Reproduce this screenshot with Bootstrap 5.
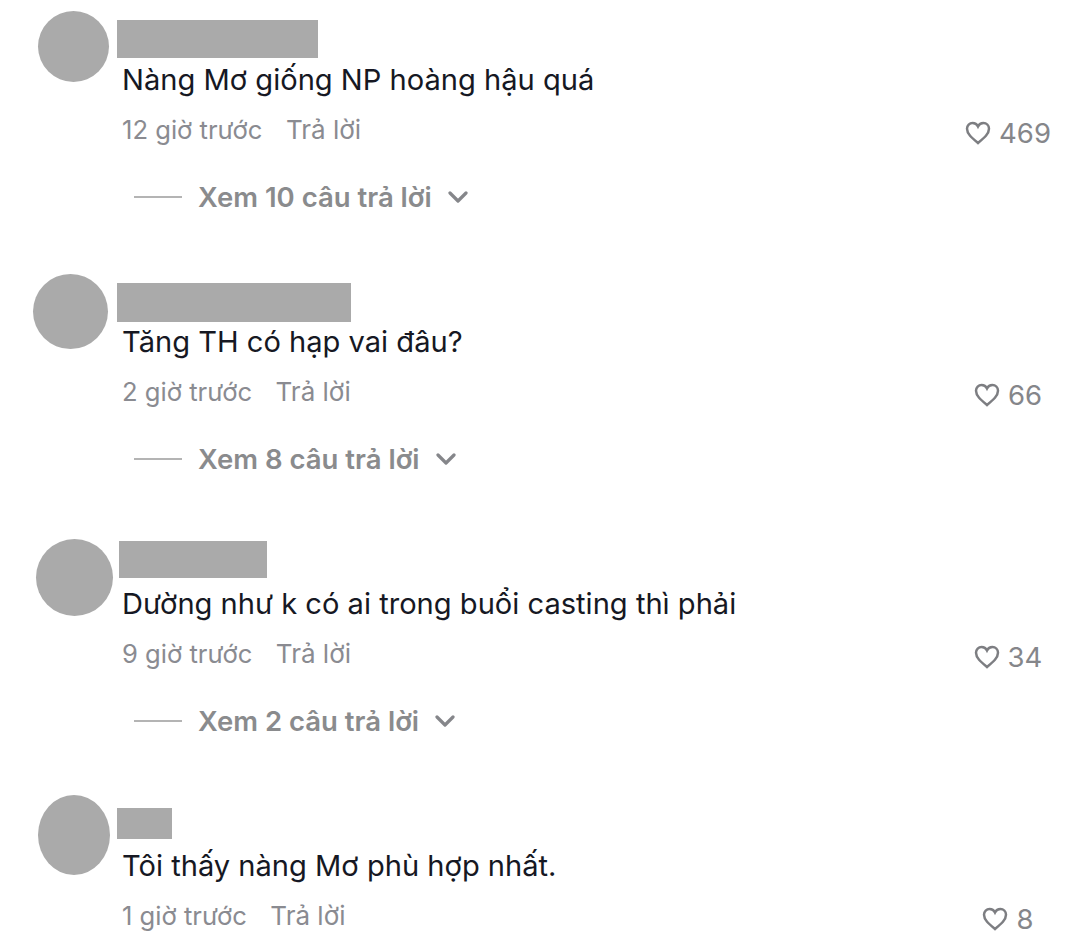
<!DOCTYPE html>
<html lang="vi"><head><meta charset="utf-8">
<link href="https://cdn.jsdelivr.net/npm/bootstrap@5.3.0/dist/css/bootstrap.min.css" rel="stylesheet">
<script src="https://cdn.jsdelivr.net/npm/bootstrap@5.3.0/dist/js/bootstrap.bundle.min.js"></script>
<style>
html,body{background:#fff;overflow:hidden;}
body{font-family:"Inter","Noto Sans",sans-serif;width:1078px;height:950px;}
.cmt{height:262px;}
.cmt:last-child{height:164px;}
.avcol{width:117px;flex:none;}
.ava{border-radius:50%;background:#aaa;}
.a1{width:71px;height:71px;margin:11px 0 0 38px;}
.a2{width:75px;height:75px;margin:12px 0 0 33px;}
.a3{width:77px;height:77px;margin:15px 0 0 36px;}
.a4{width:72px;height:80px;margin:9px 0 0 38px;}
.nmwrap{height:62px;}
.nm{background:#aaa;}
.n1{width:201px;height:38px;margin-top:20px;}
.n2{width:234px;height:39px;margin-top:21px;}
.n3{width:148px;height:37px;margin:17px 0 0 2px;}
.n4{width:55px;height:31px;margin-top:22px;}
.ctext{margin-left:5px;height:52px;font-size:29.1px;color:#161823;line-height:36px;white-space:nowrap;}
.meta{margin-left:5px;font-size:25.6px;color:#8a8b91;line-height:32px;white-space:nowrap;gap:23.5px;}
.reply{font-size:26px;}
.likes{width:140px;flex:none;font-size:27.5px;color:#85868a;line-height:32px;gap:8px;margin-top:3px;}
.more{margin:32px 0 0 17px;font-size:27.5px;font-weight:600;color:#8a8b8d;line-height:32px;gap:16px;white-space:nowrap;}
.rule{width:48px;height:2px;background:#b4b4b4;}
</style></head><body>

<div class="cmt d-flex">
  <div class="avcol"><div class="ava a1"></div></div>
  <div class="flex-grow-1">
    <div class="nmwrap d-flex align-items-start"><div class="nm n1"></div></div>
    <div class="ctext">Nàng Mơ giống NP hoàng hậu quá</div>
    <div class="d-flex justify-content-between">
      <div class="meta d-flex"><span>12 giờ trước</span><span class="reply">Trả lời</span></div>
      <div class="likes d-flex align-items-center justify-content-center">
        <svg width="26" height="26" viewBox="0 0 26 26" fill="none" stroke="#7d7e82" stroke-width="2.5"><path d="M13 23 C7 18 2 14 2 8.8 C2 5.4 4.6 3 7.6 3 C10 3 12 4.4 13 6.4 C14 4.4 16 3 18.4 3 C21.4 3 24 5.4 24 8.8 C24 14 19 18 13 23Z"/></svg><span>469</span>
      </div>
    </div>
    <div class="more d-flex align-items-center"><div class="rule"></div><div>Xem 10 câu trả lời</div><svg width="20" height="14" viewBox="0 0 20 14" fill="none" stroke="#85868a" stroke-width="3.2" stroke-linecap="round" stroke-linejoin="round"><path d="M2 3 L10 11 L18 3"/></svg></div>
  </div>
</div>

<div class="cmt d-flex">
  <div class="avcol"><div class="ava a2"></div></div>
  <div class="flex-grow-1">
    <div class="nmwrap d-flex align-items-start"><div class="nm n2"></div></div>
    <div class="ctext">Tăng TH có hạp vai đâu?</div>
    <div class="d-flex justify-content-between">
      <div class="meta d-flex"><span>2 giờ trước</span><span class="reply">Trả lời</span></div>
      <div class="likes d-flex align-items-center justify-content-center">
        <svg width="26" height="26" viewBox="0 0 26 26" fill="none" stroke="#7d7e82" stroke-width="2.5"><path d="M13 23 C7 18 2 14 2 8.8 C2 5.4 4.6 3 7.6 3 C10 3 12 4.4 13 6.4 C14 4.4 16 3 18.4 3 C21.4 3 24 5.4 24 8.8 C24 14 19 18 13 23Z"/></svg><span>66</span>
      </div>
    </div>
    <div class="more d-flex align-items-center"><div class="rule"></div><div>Xem 8 câu trả lời</div><svg width="20" height="14" viewBox="0 0 20 14" fill="none" stroke="#85868a" stroke-width="3.2" stroke-linecap="round" stroke-linejoin="round"><path d="M2 3 L10 11 L18 3"/></svg></div>
  </div>
</div>

<div class="cmt d-flex">
  <div class="avcol"><div class="ava a3"></div></div>
  <div class="flex-grow-1">
    <div class="nmwrap d-flex align-items-start"><div class="nm n3"></div></div>
    <div class="ctext">Dường như k có ai trong buổi casting thì phải</div>
    <div class="d-flex justify-content-between">
      <div class="meta d-flex"><span>9 giờ trước</span><span class="reply">Trả lời</span></div>
      <div class="likes d-flex align-items-center justify-content-center">
        <svg width="26" height="26" viewBox="0 0 26 26" fill="none" stroke="#7d7e82" stroke-width="2.5"><path d="M13 23 C7 18 2 14 2 8.8 C2 5.4 4.6 3 7.6 3 C10 3 12 4.4 13 6.4 C14 4.4 16 3 18.4 3 C21.4 3 24 5.4 24 8.8 C24 14 19 18 13 23Z"/></svg><span>34</span>
      </div>
    </div>
    <div class="more d-flex align-items-center"><div class="rule"></div><div>Xem 2 câu trả lời</div><svg width="20" height="14" viewBox="0 0 20 14" fill="none" stroke="#85868a" stroke-width="3.2" stroke-linecap="round" stroke-linejoin="round"><path d="M2 3 L10 11 L18 3"/></svg></div>
  </div>
</div>

<div class="cmt d-flex">
  <div class="avcol"><div class="ava a4"></div></div>
  <div class="flex-grow-1">
    <div class="nmwrap d-flex align-items-start"><div class="nm n4"></div></div>
    <div class="ctext">Tôi thấy nàng Mơ phù hợp nhất.</div>
    <div class="d-flex justify-content-between">
      <div class="meta d-flex"><span>1 giờ trước</span><span class="reply">Trả lời</span></div>
      <div class="likes d-flex align-items-center justify-content-center">
        <svg width="26" height="26" viewBox="0 0 26 26" fill="none" stroke="#7d7e82" stroke-width="2.5"><path d="M13 23 C7 18 2 14 2 8.8 C2 5.4 4.6 3 7.6 3 C10 3 12 4.4 13 6.4 C14 4.4 16 3 18.4 3 C21.4 3 24 5.4 24 8.8 C24 14 19 18 13 23Z"/></svg><span>8</span>
      </div>
    </div>
  </div>
</div>

</body></html>
